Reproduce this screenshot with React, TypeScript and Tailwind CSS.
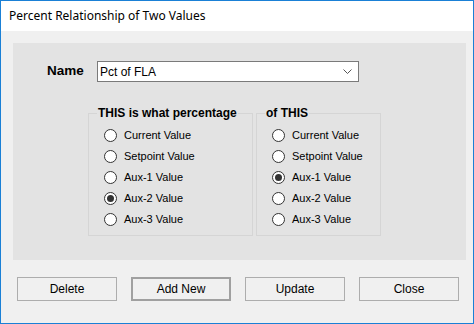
const left = ["Current Value", "Setpoint Value", "Aux-1 Value", "Aux-2 Value", "Aux-3 Value"];

const Radio = ({ label, checked }: { label: string; checked?: boolean }) => (
  <div className="flex h-[21px] items-center gap-[7px]">
    <span className="flex h-[13px] w-[13px] items-center justify-center rounded-full border border-[#333] bg-white">
      {checked && <span className="h-[7px] w-[7px] rounded-full bg-[#333]" />}
    </span>
    <span className="text-[11px] text-black">{label}</span>
  </div>
);

const Group = ({
  title,
  selected,
  width,
}: {
  title: string;
  selected: number;
  width: string;
}) => (
  <div className={`relative h-[123px] border border-[#d5d5d5] pl-[15px] pt-[11px] ${width}`}>
    <span className="absolute -top-[8px] left-[8px] bg-[#e3e3e3] px-[1px] text-[12px] leading-[15px] font-bold text-black">
      {title}
    </span>
    {left.map((l, i) => (
      <Radio key={l} label={l} checked={i === selected} />
    ))}
  </div>
);

const Btn = ({ label, def }: { label: string; def?: boolean }) => (
  <button
    type="button"
    className={`flex h-[24px] w-[100px] items-center justify-center bg-[#f0f0f0] text-[12px] text-black ${
      def ? "border-2 border-[#a0a0a0]" : "border border-[#adadad]"
    }`}
  >
    {label}
  </button>
);

export default function App() {
  return (
    <div
      className="flex h-[324px] w-[474px] flex-col border border-[#1a80d6] bg-[#f0f0f0]"
      style={{ fontFamily: '"Liberation Sans", Arial, sans-serif' }}
    >
      <div
        className="flex h-[30px] items-center bg-white pl-[8px] text-[12px] text-black"
        style={{ fontFamily: '"Noto Sans", "Open Sans", sans-serif' }}
      >
        Percent Relationship of Two Values
      </div>
      <div className="ml-[12px] mt-[12px] h-[217px] w-[453px] bg-[#e3e3e3] pt-[18px]">
        <div className="flex items-center">
          <span className="ml-[34px] w-[50px] text-[13.5px] font-bold text-black">Name</span>
          <div className="flex h-[21px] w-[262px] items-center justify-between border border-[#7a7a7a] bg-white pl-[2px] pr-[6px] text-[12px] text-black">
            <span>Pct of FLA</span>
            <svg width="9" height="6" viewBox="0 0 9 6" fill="none">
              <path d="M0.5 0.5 L4.5 4.5 L8.5 0.5" stroke="#555" strokeWidth="1" />
            </svg>
          </div>
        </div>
        <div className="ml-[75px] mt-[31px] flex gap-[3px]">
          <Group title="THIS is what percentage" selected={3} width="w-[165px]" />
          <Group title="of  THIS" selected={2} width="w-[125px]" />
        </div>
      </div>
      <div className="ml-[16px] mt-[17px] flex gap-[14px]">
        <Btn label="Delete" />
        <Btn label="Add New" def />
        <Btn label="Update" />
        <Btn label="Close" />
      </div>
    </div>
  );
}
